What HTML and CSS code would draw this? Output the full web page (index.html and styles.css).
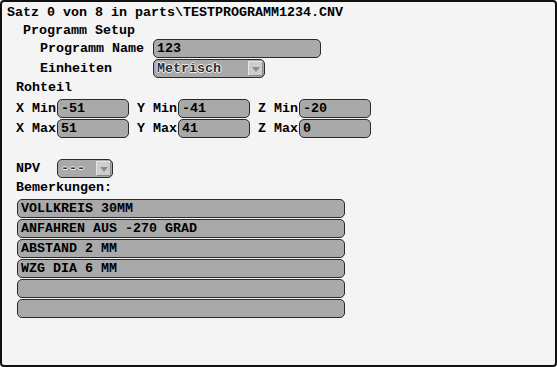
FILE: index.html
```html
<!DOCTYPE html>
<html lang="de">
<head>
    <meta charset="UTF-8">
    <title>Programm Setup</title>
    <link rel="stylesheet" href="styles.css">
</head>
<body>
    <div class="screen">
        <div class="title">Satz 0 von 8 in parts\TESTPROGRAMM1234.CNV</div>
        <div class="section setup-head">Programm Setup</div>

        <!-- Programm Daten -->
        <div class="row indent">
            <span class="label wide">Programm Name</span>
            <div class="field name-field">123</div>
        </div>
        <div class="row indent">
            <span class="label wide">Einheiten</span>
            <div class="field select units-select">
                <span class="select-text">Metrisch</span>
                <span class="select-btn"></span>
            </div>
        </div>

        <!-- Rohteil -->
        <div class="row section">Rohteil</div>
        <div class="row">
            <span class="label">X Min</span><div class="field coord">-51</div>
            <span class="label gap">Y Min</span><div class="field coord">-41</div>
            <span class="label gap">Z Min</span><div class="field coord">-20</div>
        </div>
        <div class="row">
            <span class="label">X Max</span><div class="field coord">51</div>
            <span class="label gap">Y Max</span><div class="field coord">41</div>
            <span class="label gap">Z Max</span><div class="field coord">0</div>
        </div>
        <div class="row"></div>

        <div class="row">
            <span class="label">NPV</span>
            <div class="field select npv-select">
                <span class="select-text">---</span>
                <span class="select-btn"></span>
            </div>
        </div>

        <!-- Bemerkungen -->
        <div class="row section">Bemerkungen:</div>
        <div class="notes">
            <div class="field note">VOLLKREIS 30MM</div>
            <div class="field note">ANFAHREN AUS -270 GRAD</div>
            <div class="field note">ABSTAND 2 MM</div>
            <div class="field note">WZG DIA 6 MM</div>
            <div class="field note"></div>
            <div class="field note"></div>
        </div>
    </div>
</body>
</html>
```

FILE: styles.css
```css
* {
    margin: 0;
    padding: 0;
    box-sizing: border-box;
}

html, body {
    width: 557px;
    height: 367px;
    overflow: hidden;
    background: #fff;
}

.screen {
    width: 557px;
    height: 367px;
    border: 2px solid #111;
    border-radius: 4px;
    background: #f4f4f4;
    color: #000;
    font-family: "Liberation Mono", "DejaVu Sans Mono", monospace;
    font-size: 13.33px;
    font-weight: bold;
    padding: 0 0 0 14px;
}

.title {
    height: 19px;
    line-height: 18px;
    padding-top: 2px;
    margin-left: -9px;
    white-space: pre;
}

.setup-head {
    height: 17px;
    line-height: 17px;
    margin-left: 7px;
}

.row {
    display: flex;
    align-items: center;
    height: 20px;
    white-space: pre;
}

.indent {
    padding-left: 24px;
}

.section {
    line-height: 20px;
}

.label {
    display: inline-block;
    width: 41px;
}

.label.wide {
    width: 113px;
}

.label.gap {
    margin-left: 8px;
}

.field {
    height: 19px;
    line-height: 17px;
    background: #a9a9a9;
    border: 1px solid #2a2a2a;
    border-radius: 5px;
    padding: 0 3px;
    white-space: pre;
}

.name-field {
    width: 168px;
}

.coord {
    width: 72px;
}

.select {
    display: flex;
    align-items: center;
    justify-content: space-between;
    padding-right: 1px;
}

.units-select {
    width: 112px;
}

.npv-select {
    width: 56px;
}

.select-text {
    color: #2e2e2e;
    text-shadow: 1px 0 0 #f0f0f0, -1px 0 0 #f0f0f0, 0 1px 0 #f0f0f0, 0 -1px 0 #f0f0f0;
}

.select-btn {
    position: relative;
    width: 15px;
    height: 15px;
    background: #cdcdcd;
    border: 1px solid #e6e6e6;
    border-right-color: #8a8a8a;
    border-bottom-color: #8a8a8a;
}

.select-btn::after {
    content: "";
    position: absolute;
    left: 3px;
    top: 5px;
    border-left: 4px solid transparent;
    border-right: 4px solid transparent;
    border-top: 5px solid #8c8c8c;
}

.notes {
    display: flex;
    flex-direction: column;
    gap: 1px;
    padding-top: 1px;
    margin-left: 1px;
}

.note {
    width: 328px;
    height: 19px;
}
```
